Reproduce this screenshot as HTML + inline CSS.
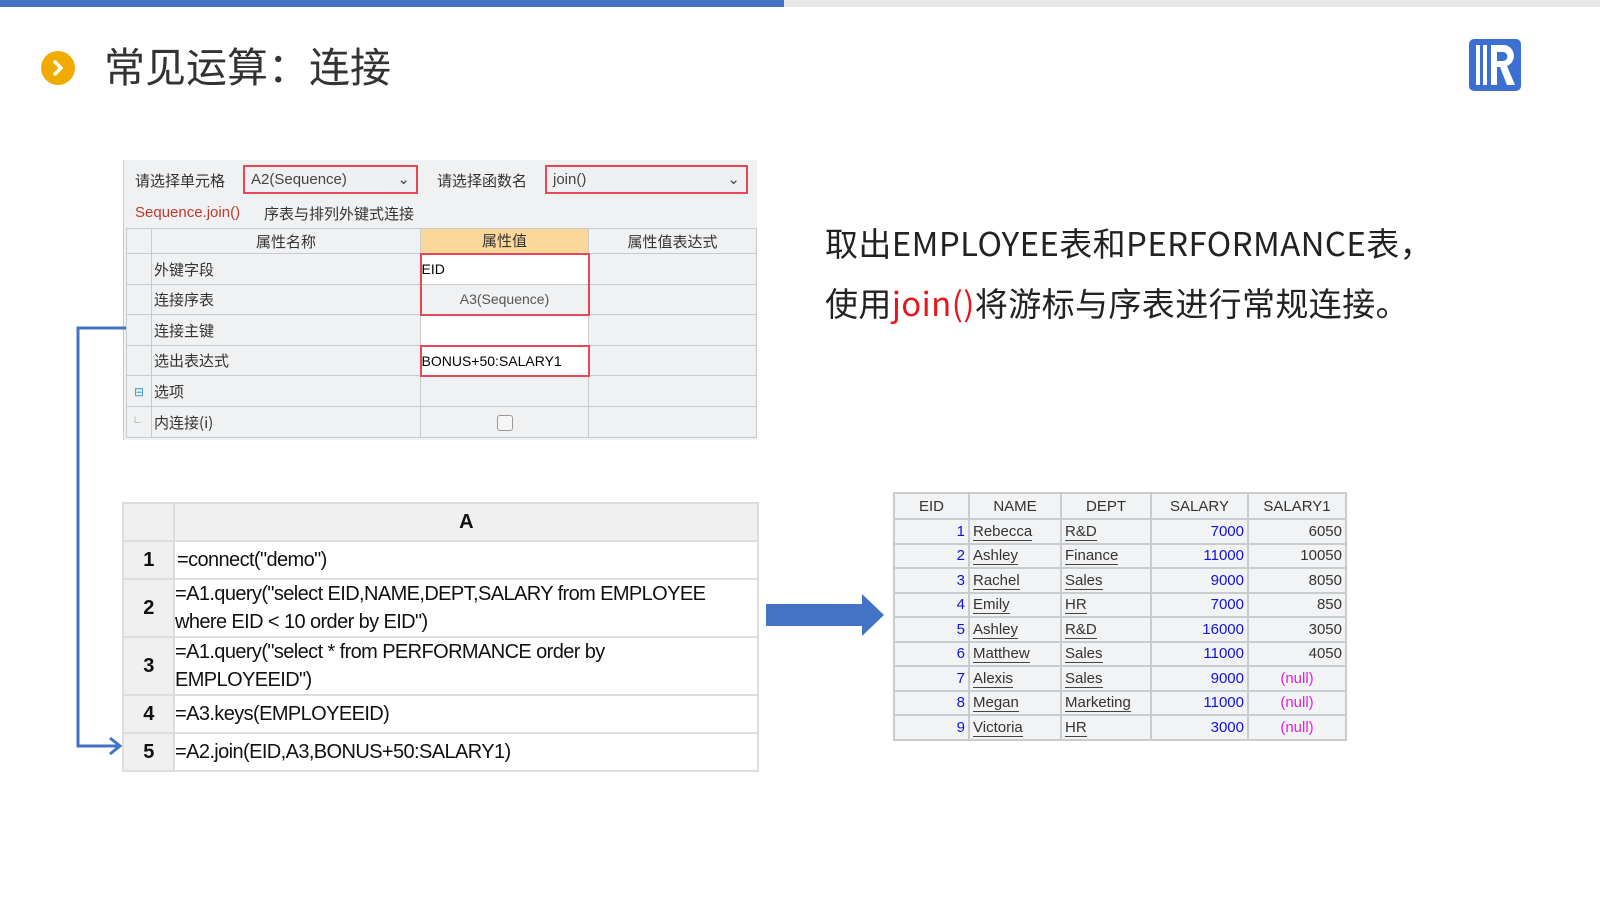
<!DOCTYPE html>
<html><head><meta charset="utf-8"><style>
*{margin:0;padding:0;box-sizing:border-box}
body{width:1600px;height:900px;background:#fff;position:relative;overflow:hidden;font-family:"Liberation Sans","Noto Sans CJK SC",sans-serif}
.a{position:absolute}
.cj{font-family:"Noto Sans CJK SC","Liberation Sans",sans-serif}
table{border-collapse:collapse;position:absolute}
</style></head><body>
<div class="a" style="left:0;top:0;width:784px;height:7px;background:#4472c4"></div>
<div class="a" style="left:784px;top:0;width:816px;height:7px;background:#e7e7e7"></div>
<div class="a" style="left:41px;top:51px;width:34px;height:34px;border-radius:50%;background:#f0ab00"></div>
<svg class="a" style="left:41px;top:51px" width="34" height="34"><path d="M14 11 L20 17 L14 23" stroke="#fff" stroke-width="3.5" fill="none" stroke-linecap="round" stroke-linejoin="round"/></svg>
<div class="a cj" style="left:104px;top:36px;font-size:41px;color:#333;line-height:56px">常见运算：连接</div>
<svg class="a" style="left:1469px;top:39px" width="52" height="52"><rect x="0" y="0" width="52" height="52" rx="5" fill="#3c6fd0"/><rect x="7" y="6" width="4" height="40" fill="#fff"/><rect x="14" y="6" width="4" height="40" fill="#fff"/><path d="M22 6 H36 A11 11 0 0 1 38 27 L46 46 H38 L31 28 H28 V46 H22 Z M28 13 V22 H34 A4.5 4.5 0 0 0 34 13 Z" fill="#fff"/></svg>

<div class="a" style="left:123px;top:160px;width:634px;height:280px;background:#f0f1f2;border-left:1px solid #ccc"></div>
<div class="a cj" style="left:135px;top:170px;font-size:15px;color:#333">请选择单元格</div>
<div class="a" style="left:243px;top:165px;width:175px;height:29px;border:2px solid #e8475a;background:#eef0f2;font-size:15px;color:#444;padding:4px 6px">A2(Sequence)<span style="position:absolute;right:6px;top:3px">⌄</span></div>
<div class="a cj" style="left:437px;top:170px;font-size:15px;color:#333">请选择函数名</div>
<div class="a" style="left:545px;top:165px;width:203px;height:29px;border:2px solid #e8475a;background:#eef0f2;font-size:15px;color:#444;padding:4px 6px">join()<span style="position:absolute;right:6px;top:3px">⌄</span></div>
<div class="a" style="left:135px;top:204px;font-size:15px;color:#c0392b">Sequence.join()</div>
<div class="a cj" style="left:264px;top:203px;font-size:15px;color:#333">序表与排列外键式连接</div>
<table style="left:126px;top:228px;font-size:15px;color:#333" class="cj">
<colgroup><col style="width:25px"><col style="width:269px"><col style="width:168px"><col style="width:168px"></colgroup>
<tr style="height:25px"><td style="border:1px solid #c8cacc"></td><td style="border:1px solid #c8cacc;text-align:center">属性名称</td><td style="border:1px solid #c8cacc;text-align:center;background:#fbd89a">属性值</td><td style="border:1px solid #c8cacc;text-align:center">属性值表达式</td></tr>
<tr style="height:31px"><td style="border:1px solid #c8cacc"></td><td style="border:1px solid #c8cacc;padding-left:2px">外键字段</td><td style="border:2px solid #e8475a;border-bottom:none;background:#fff;font-family:'Liberation Sans';font-size:14px;color:#000">EID</td><td style="border:1px solid #c8cacc"></td></tr>
<tr style="height:30px"><td style="border:1px solid #c8cacc"></td><td style="border:1px solid #c8cacc;padding-left:2px">连接序表</td><td style="border:2px solid #e8475a;border-top:1px solid #ccc;text-align:center;font-family:'Liberation Sans';font-size:14px;color:#555">A3(Sequence)</td><td style="border:1px solid #c8cacc"></td></tr>
<tr style="height:31px"><td style="border:1px solid #c8cacc"></td><td style="border:1px solid #c8cacc;padding-left:2px">连接主键</td><td style="border:1px solid #c8cacc;background:#fff"></td><td style="border:1px solid #c8cacc"></td></tr>
<tr style="height:30px"><td style="border:1px solid #c8cacc"></td><td style="border:1px solid #c8cacc;padding-left:2px">选出表达式</td><td style="border:2px solid #e8475a;background:#fff;font-family:'Liberation Sans';font-size:14px;color:#000">BONUS+50:SALARY1</td><td style="border:1px solid #c8cacc"></td></tr>
<tr style="height:31px"><td style="border:1px solid #c8cacc;text-align:center;color:#39c;font-size:12px">⊟</td><td style="border:1px solid #c8cacc;padding-left:2px">选项</td><td style="border:1px solid #c8cacc"></td><td style="border:1px solid #c8cacc"></td></tr>
<tr style="height:31px"><td style="border:1px solid #c8cacc;color:#888;font-size:11px">&nbsp;└</td><td style="border:1px solid #c8cacc;padding-left:2px">内连接(i)</td><td style="border:1px solid #c8cacc;text-align:center"><span style="display:inline-block;width:16px;height:16px;border:1px solid #999;border-radius:3px;background:#f6f6f6;vertical-align:middle"></span></td><td style="border:1px solid #c8cacc"></td></tr>
</table>

<svg class="a" style="left:70px;top:320px" width="60" height="440"><path d="M56 8 H8 V426 H48" stroke="#4472c4" stroke-width="3" fill="none"/><path d="M40 418 L50 426 L40 434" stroke="#4472c4" stroke-width="3" fill="none"/></svg>

<table style="left:122px;top:502px;font-size:20px;letter-spacing:-0.6px;color:#111;font-family:'Liberation Sans','Noto Sans CJK SC',sans-serif">
<colgroup><col style="width:51px"><col style="width:584px"></colgroup>
<tr style="height:38px;background:#f0f0f0"><td style="border:2px solid #ddd"></td><td style="border:2px solid #ddd;text-align:center;font-weight:bold">A</td></tr>
<tr style="height:38px"><td style="border:2px solid #ddd;background:#f0f0f0;text-align:center;font-weight:bold">1</td><td style="border:2px solid #ddd;padding-left:2px">=connect("demo")</td></tr>
<tr style="height:57px"><td style="border:2px solid #ddd;background:#f0f0f0;text-align:center;font-weight:bold">2</td><td style="border:2px solid #ddd;line-height:28px">=A1.query("select EID,NAME,DEPT,SALARY from EMPLOYEE<br>where EID &lt; 10 order by EID")</td></tr>
<tr style="height:57px"><td style="border:2px solid #ddd;background:#f0f0f0;text-align:center;font-weight:bold">3</td><td style="border:2px solid #ddd;line-height:28px">=A1.query("select * from PERFORMANCE order by<br>EMPLOYEEID")</td></tr>
<tr style="height:38px"><td style="border:2px solid #ddd;background:#f0f0f0;text-align:center;font-weight:bold">4</td><td style="border:2px solid #ddd">=A3.keys(EMPLOYEEID)</td></tr>
<tr style="height:38px"><td style="border:2px solid #ddd;background:#f0f0f0;text-align:center;font-weight:bold">5</td><td style="border:2px solid #ddd">=A2.join(EID,A3,BONUS+50:SALARY1)</td></tr>
</table>

<svg class="a" style="left:766px;top:594px" width="120" height="42"><path d="M0 10 H96 V0 L118 21 L96 42 V32 H0 Z" fill="#4472c4"/></svg>

<div class="a cj" style="left:825px;top:212px;font-size:33px;letter-spacing:0.4px;color:#222;line-height:60px;white-space:nowrap">取出EMPLOYEE表和PERFORMANCE表，<br>使用<span style="color:#e8141e">join()</span>将游标与序表进行常规连接。</div>

<table style="left:893px;top:492px;font-size:15px;background:#f2f3f4;color:#333">
<colgroup><col style="width:75px"><col style="width:92px"><col style="width:90px"><col style="width:97px"><col style="width:98px"></colgroup>
<tr style="height:26px;text-align:center"><td style="border:2px solid #c9cbcd">EID</td><td style="border:2px solid #c9cbcd">NAME</td><td style="border:2px solid #c9cbcd">DEPT</td><td style="border:2px solid #c9cbcd">SALARY</td><td style="border:2px solid #c9cbcd">SALARY1</td></tr>
</table>
<table style="left:893px;top:518px;font-size:15px;background:#f2f3f4;color:#333" id="r">
<colgroup><col style="width:75px"><col style="width:92px"><col style="width:90px"><col style="width:97px"><col style="width:98px"></colgroup>
<style>#r td{border:2px solid #c9cbcd;padding:0 3px;height:24.5px}#r u{text-decoration:none;border-bottom:1px solid #444}#r .b{color:#1010e0;text-align:right}#r .n{color:#e020e0;text-align:center}#r .g{text-align:right}</style>
<tr><td class="b">1</td><td><u>Rebecca</u></td><td><u>R&amp;D</u></td><td class="b">7000</td><td class="g">6050</td></tr>
<tr><td class="b">2</td><td><u>Ashley</u></td><td><u>Finance</u></td><td class="b">11000</td><td class="g">10050</td></tr>
<tr><td class="b">3</td><td><u>Rachel</u></td><td><u>Sales</u></td><td class="b">9000</td><td class="g">8050</td></tr>
<tr><td class="b">4</td><td><u>Emily</u></td><td><u>HR</u></td><td class="b">7000</td><td class="g">850</td></tr>
<tr><td class="b">5</td><td><u>Ashley</u></td><td><u>R&amp;D</u></td><td class="b">16000</td><td class="g">3050</td></tr>
<tr><td class="b">6</td><td><u>Matthew</u></td><td><u>Sales</u></td><td class="b">11000</td><td class="g">4050</td></tr>
<tr><td class="b">7</td><td><u>Alexis</u></td><td><u>Sales</u></td><td class="b">9000</td><td class="n">(null)</td></tr>
<tr><td class="b">8</td><td><u>Megan</u></td><td><u>Marketing</u></td><td class="b">11000</td><td class="n">(null)</td></tr>
<tr><td class="b">9</td><td><u>Victoria</u></td><td><u>HR</u></td><td class="b">3000</td><td class="n">(null)</td></tr>
</table>
</body></html>
